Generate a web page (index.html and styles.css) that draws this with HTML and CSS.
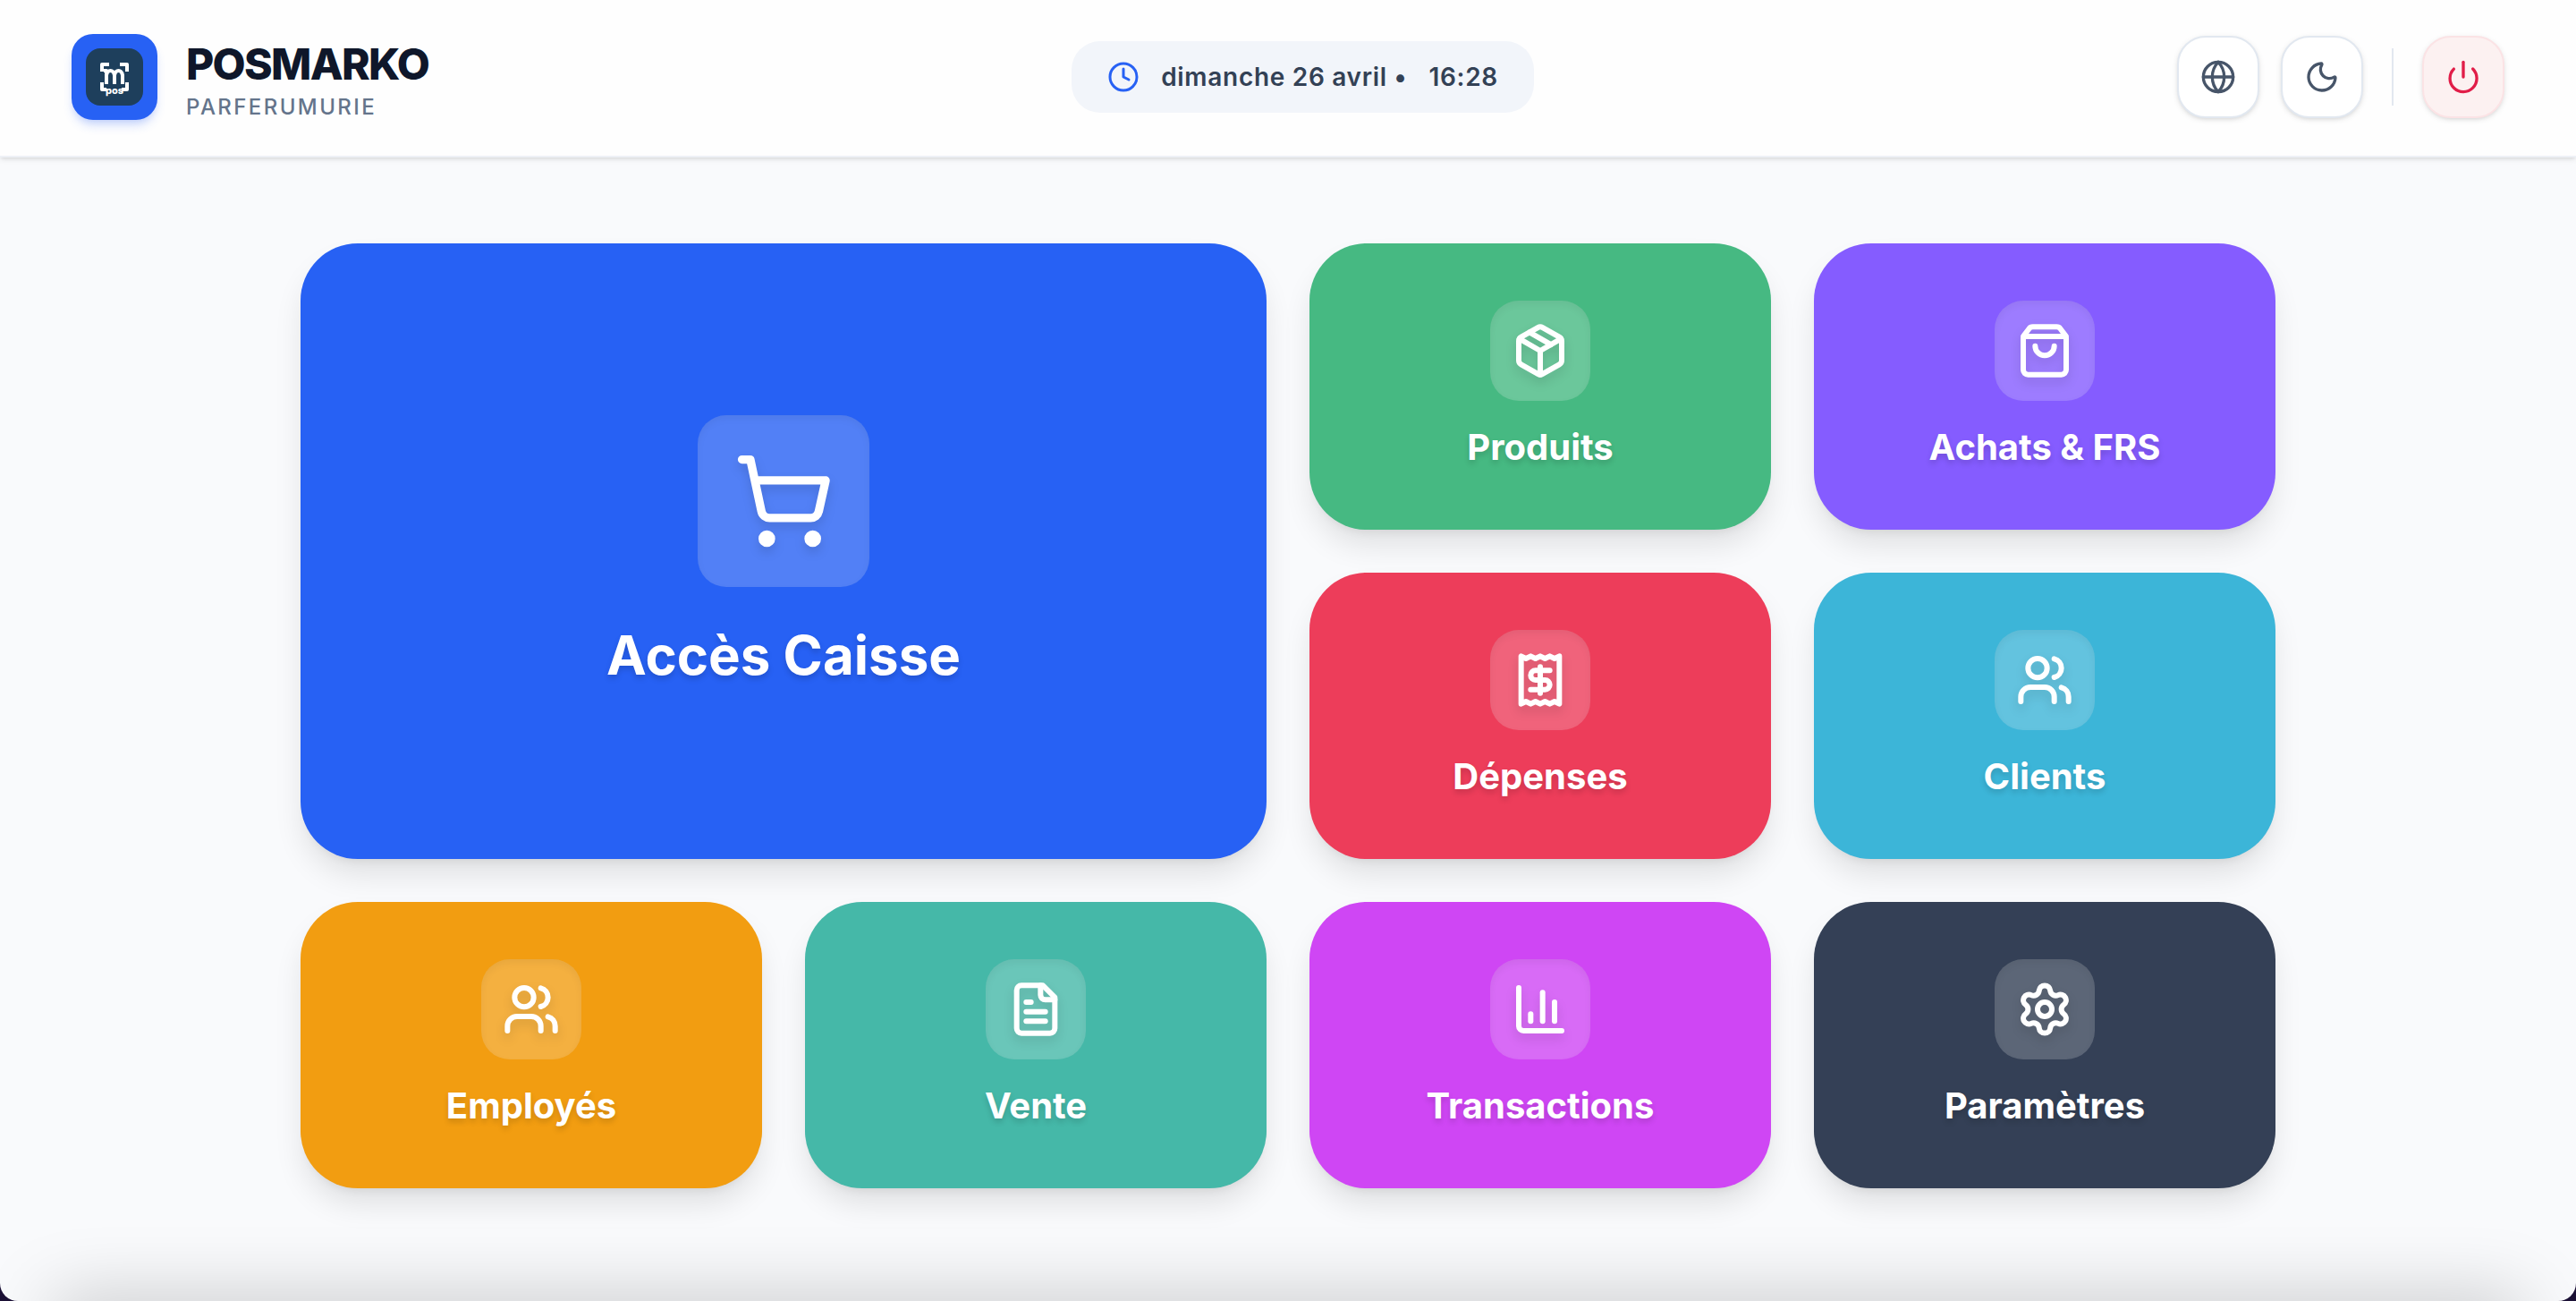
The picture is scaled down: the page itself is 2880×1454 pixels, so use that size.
FILE: index.html
```html
<!DOCTYPE html>
<html lang="fr">
<head>
<meta charset="utf-8">
<meta name="viewport" content="width=device-width, initial-scale=1">
<title>POSMARKO</title>
<link rel="stylesheet" href="styles.css">
</head>
<body>
<div class="window">
  <header class="topbar">
    <div class="brand">
      <div class="logo">
        <svg class="logo-mark" viewBox="0 0 64 64" aria-hidden="true">
          <rect width="64" height="64" rx="16" fill="#1e3f5c"/>
          <g fill="none" stroke="#fff" stroke-width="4" stroke-linejoin="round">
            <path d="M18 26v-8h8M38 18h8v8M18 38v8h5M46 38v8h-6"/>
            <path d="M20 25h3v15M23 30q1-5 4.500-5t4.500 5v10M32 30q1-5 4.500-5t4.500 5v10"/>
          </g>
          <text x="32" y="51" class="logo-pos">pos</text>
        </svg>
      </div>
      <div class="brand-text">
        <h1 class="brand-name">POSMARKO</h1>
        <p class="brand-sub">PARFERUMURIE</p>
      </div>
    </div>

    <div class="clock">
      <svg class="icon clock-icon" viewBox="0 0 24 24" aria-hidden="true"><circle cx="12" cy="12" r="10"/><path d="M12 6v6l4 2"/></svg>
      <span class="clock-text">dimanche 26 avril •</span>
      <time class="clock-time">16:28</time>
    </div>

    <div class="actions">
      <button class="action" type="button" aria-label="Langue">
        <svg class="icon" viewBox="0 0 24 24" aria-hidden="true"><circle cx="12" cy="12" r="10"/><path d="M12 2a14.5 14.5 0 0 0 0 20 14.5 14.5 0 0 0 0-20"/><path d="M2 12h20"/></svg>
      </button>
      <button class="action" type="button" aria-label="Mode sombre">
        <svg class="icon" viewBox="0 0 24 24" aria-hidden="true"><path d="M20.985 12.486a9 9 0 1 1-9.473-9.472c.405-.022.617.46.402.803a6 6 0 0 0 8.268 8.268c.344-.215.825-.004.803.401"/></svg>
      </button>
      <span class="divider"></span>
      <button class="action action-danger" type="button" aria-label="Quitter">
        <svg class="icon" viewBox="0 0 24 24" aria-hidden="true"><path d="M12 2v10"/><path d="M18.4 6.6a9 9 0 1 1-12.77.04"/></svg>
      </button>
    </div>
  </header>

  <main class="tiles">
    <button class="tile tile-large blue" type="button">
      <span class="badge"><svg class="icon" viewBox="0 0 24 24" aria-hidden="true"><circle cx="8" cy="21" r="1"/><circle cx="19" cy="21" r="1"/><path d="M2.05 2.05h2l2.66 12.42a2 2 0 0 0 2 1.58h9.78a2 2 0 0 0 1.95-1.57l1.65-7.43H5.12"/></svg></span>
      <span class="label">Accès Caisse</span>
    </button>
    <button class="tile green" type="button">
      <span class="badge"><svg class="icon" viewBox="0 0 24 24" aria-hidden="true"><path d="M11 21.73a2 2 0 0 0 2 0l7-4A2 2 0 0 0 21 16V8a2 2 0 0 0-1-1.73l-7-4a2 2 0 0 0-2 0l-7 4A2 2 0 0 0 3 8v8a2 2 0 0 0 1 1.73z"/><path d="M12 22V12"/><path d="M3.29 7 12 12l8.71-5"/><path d="m7.5 4.27 9 5.15"/></svg></span>
      <span class="label">Produits</span>
    </button>
    <button class="tile violet" type="button">
      <span class="badge"><svg class="icon" viewBox="0 0 24 24" aria-hidden="true"><path d="M16 10a4 4 0 0 1-8 0"/><path d="M3.103 6.034h17.794"/><path d="M3.4 5.467a2 2 0 0 0-.4 1.2V20a2 2 0 0 0 2 2h14a2 2 0 0 0 2-2V6.667a2 2 0 0 0-.4-1.2l-2-2.667A2 2 0 0 0 17 2H7a2 2 0 0 0-1.6.8z"/></svg></span>
      <span class="label">Achats &amp; FRS</span>
    </button>
    <button class="tile rose" type="button">
      <span class="badge"><svg class="icon" viewBox="0 0 24 24" aria-hidden="true"><path d="M4 2v20l2-1 2 1 2-1 2 1 2-1 2 1 2-1 2 1V2l-2 1-2-1-2 1-2-1-2 1-2-1-2 1Z"/><path d="M16 8h-6a2 2 0 1 0 0 4h4a2 2 0 1 1 0 4H8"/><path d="M12 17.5v-11"/></svg></span>
      <span class="label">Dépenses</span>
    </button>
    <button class="tile cyan" type="button">
      <span class="badge"><svg class="icon" viewBox="0 0 24 24" aria-hidden="true"><path d="M16 21v-2a4 4 0 0 0-4-4H6a4 4 0 0 0-4 4v2"/><path d="M16 3.128a4 4 0 0 1 0 7.744"/><path d="M22 21v-2a4 4 0 0 0-3-3.87"/><circle cx="9" cy="7" r="4"/></svg></span>
      <span class="label">Clients</span>
    </button>
    <button class="tile amber" type="button">
      <span class="badge"><svg class="icon" viewBox="0 0 24 24" aria-hidden="true"><path d="M16 21v-2a4 4 0 0 0-4-4H6a4 4 0 0 0-4 4v2"/><path d="M16 3.128a4 4 0 0 1 0 7.744"/><path d="M22 21v-2a4 4 0 0 0-3-3.87"/><circle cx="9" cy="7" r="4"/></svg></span>
      <span class="label">Employés</span>
    </button>
    <button class="tile teal" type="button">
      <span class="badge"><svg class="icon" viewBox="0 0 24 24" aria-hidden="true"><path d="M15 2H6a2 2 0 0 0-2 2v16a2 2 0 0 0 2 2h12a2 2 0 0 0 2-2V7Z"/><path d="M14 2v4a2 2 0 0 0 2 2h4"/><path d="M10 9H8"/><path d="M16 13H8"/><path d="M16 17H8"/></svg></span>
      <span class="label">Vente</span>
    </button>
    <button class="tile fuchsia" type="button">
      <span class="badge"><svg class="icon" viewBox="0 0 24 24" aria-hidden="true"><path d="M3 3v16a2 2 0 0 0 2 2h16"/><path d="M18 17V9"/><path d="M13 17V5"/><path d="M8 17v-3"/></svg></span>
      <span class="label">Transactions</span>
    </button>
    <button class="tile slate" type="button">
      <span class="badge"><svg class="icon" viewBox="0 0 24 24" aria-hidden="true"><path d="M9.671 4.136a2.34 2.34 0 0 1 4.659 0 2.34 2.34 0 0 0 3.319 1.915 2.34 2.34 0 0 1 2.33 4.033 2.34 2.34 0 0 0 0 3.831 2.34 2.34 0 0 1-2.33 4.033 2.34 2.34 0 0 0-3.319 1.915 2.34 2.34 0 0 1-4.659 0 2.34 2.34 0 0 0-3.32-1.915 2.34 2.34 0 0 1-2.33-4.033 2.34 2.34 0 0 0 0-3.831A2.34 2.34 0 0 1 6.35 6.051a2.34 2.34 0 0 0 3.319-1.915"/><circle cx="12" cy="12" r="3"/></svg></span>
      <span class="label">Paramètres</span>
    </button>
  </main>
</div>
</body>
</html>
```
FILE: styles.css
```css
*, *::before, *::after { box-sizing: border-box; }

html { background: #1b1035; }

body {
  margin: 0;
  font-family: Inter, "Liberation Sans", sans-serif;
  color: #0f172a;
}

h1, p { margin: 0; }

button { font: inherit; color: inherit; cursor: pointer; }

.window {
  position: relative;
  display: flex;
  flex-direction: column;
  min-height: 100vh;
  overflow: hidden;
  background: #f9fafc;
  border-radius: 0 0 20px 20px;
}

/* soft shade that rises from the lower edge of the window */
.window::after {
  content: "";
  position: absolute;
  left: 60px;
  right: 60px;
  top: 100%;
  height: 50px;
  box-shadow: 0 0 80px rgba(0, 0, 0, 0.25);
  pointer-events: none;
}

.icon {
  display: block;
  width: 40px;
  height: 40px;
  fill: none;
  stroke: currentColor;
  stroke-width: 2;
  stroke-linecap: round;
  stroke-linejoin: round;
}

/* Top bar */
.topbar {
  display: flex;
  align-items: center;
  justify-content: space-between;
  padding: 34px 80px 36px;
  background: #fefefe;
  border-bottom: 2px solid #eef1f6;
  box-shadow: 0 2px 6px rgba(0, 0, 0, 0.1), 0 2px 4px -2px rgba(0, 0, 0, 0.1);
}

.brand { display: flex; align-items: center; gap: 32px; }

.logo {
  display: grid;
  place-items: center;
  width: 96px;
  height: 96px;
  border-radius: 24px;
  background: #2761f4;
  box-shadow: 0 8px 12px -2px rgba(39, 97, 244, 0.2), 0 4px 8px -4px rgba(39, 97, 244, 0.2);
}

.logo-mark { display: block; width: 64px; height: 64px; }

.logo-pos {
  font-size: 11px;
  font-weight: 800;
  fill: #fff;
  text-anchor: middle;
}

.brand-text { padding-top: 8px; }

.brand-name {
  font-size: 48px;
  line-height: 60px;
  font-weight: 800;
  letter-spacing: -0.035em;
}

.brand-sub {
  font-size: 24px;
  line-height: 36px;
  font-weight: 500;
  letter-spacing: 0.1em;
  color: #64748b;
}

.clock {
  display: flex;
  align-items: center;
  height: 80px;
  padding: 0 40px;
  border-radius: 32px;
  background: #f2f5fa;
  color: #334155;
  font-size: 28px;
  font-weight: 600;
  letter-spacing: 0.025em;
}

.clock-icon { width: 36px; height: 36px; color: #2761f4; }
.clock-text { margin-left: 24px; }
.clock-time { margin-left: 24px; }

.actions {
  display: flex;
  align-items: center;
  gap: 24px;
}

.action {
  display: grid;
  place-items: center;
  width: 92px;
  height: 92px;
  padding: 0;
  border: 2px solid #e2e8f0;
  border-radius: 32px;
  background: #fff;
  color: #475569;
  box-shadow: 0 2px 6px rgba(0, 0, 0, 0.1), 0 2px 4px -2px rgba(0, 0, 0, 0.1);
}

.action-danger {
  border-color: #fbe3e5;
  background: #fcf1f1;
  color: #e11d48;
}

.divider {
  width: 2px;
  height: 64px;
  margin: 0 8px;
  background: #e2e8f0;
}

/* Tiles */
.tiles {
  display: grid;
  grid-template-columns: repeat(4, 1fr);
  grid-auto-rows: 320px;
  gap: 48px;
  width: 100%;
  max-width: 2304px;
  margin: 0 auto;
  padding: 96px 48px;
}

.tile {
  display: flex;
  flex-direction: column;
  align-items: center;
  justify-content: center;
  gap: 24px;
  padding: 0;
  border: 0;
  border-radius: 64px;
  color: #fff;
  box-shadow: 0 20px 34px -4px rgba(0, 0, 0, 0.11), 0 8px 12px -8px rgba(0, 0, 0, 0.1);
}

.badge {
  display: grid;
  place-items: center;
  width: 112px;
  height: 112px;
  border-radius: 32px;
  background: rgba(255, 255, 255, 0.2);
  box-shadow: inset 0 4px 8px rgba(0, 0, 0, 0.05);
}

.badge .icon {
  width: 64px;
  height: 64px;
  stroke-width: 2.25;
  filter: drop-shadow(0 6px 6px rgba(0, 0, 0, 0.12));
}

.label {
  font-size: 40px;
  line-height: 56px;
  font-weight: 700;
  text-shadow: 0 4px 6px rgba(0, 0, 0, 0.15);
}

.tile-large { grid-column: span 2; grid-row: span 2; gap: 40px; }
.tile-large .badge { width: 192px; height: 192px; }
.tile-large .icon { width: 112px; height: 112px; stroke-width: 2; }
.tile-large .label { font-size: 60px; line-height: 72px; }

.blue { background: #2761f4; }
.green { background: #46b982; }
.violet { background: #855cff; }
.rose { background: #ed3d5a; }
.cyan { background: #3cb5d8; }
.amber { background: #f29d11; }
.teal { background: #45b8a8; }
.fuchsia { background: #cf46f4; }
.slate { background: #344056; }
```
